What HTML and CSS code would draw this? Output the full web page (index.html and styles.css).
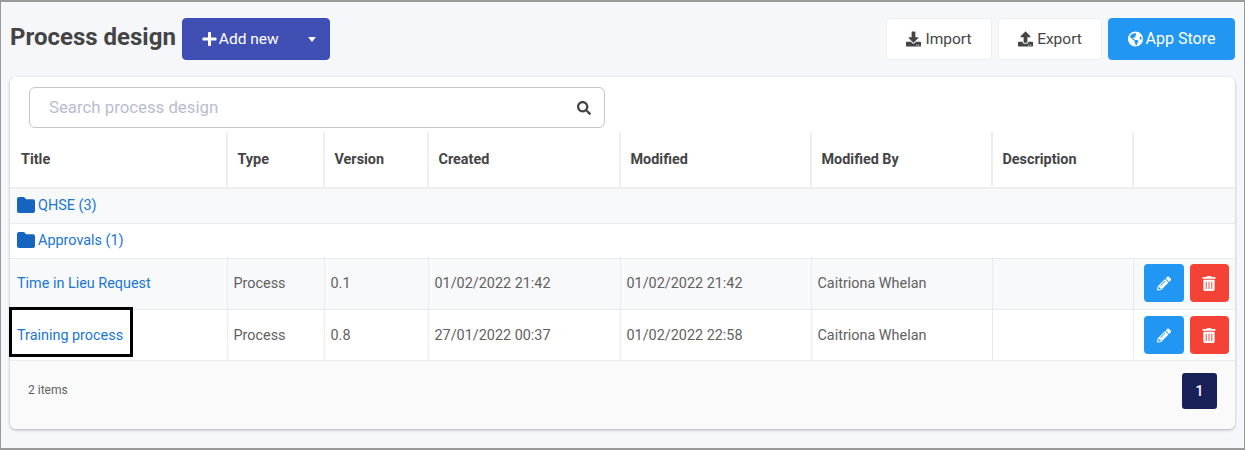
FILE: index.html
```html
<!DOCTYPE html>
<html lang="en">

<head>
    <meta charset="utf-8">
    <meta name="viewport" content="width=device-width, initial-scale=1">
    <title>Process design</title>
    <link rel="stylesheet" href="styles.css">
</head>

<body>
    <svg class="sprite" aria-hidden="true">
        <symbol id="i-plus" viewBox="0 0 448 512"><path d="M416 208H272V64c0-17.67-14.33-32-32-32h-32c-17.67 0-32 14.33-32 32v144H32c-17.67 0-32 14.33-32 32v32c0 17.67 14.33 32 32 32h144v144c0 17.67 14.33 32 32 32h32c17.67 0 32-14.33 32-32V304h144c17.67 0 32-14.33 32-32v-32c0-17.67-14.33-32-32-32z"/></symbol>
        <symbol id="i-download" viewBox="0 0 512 512"><path d="M216 0h80c13.3 0 24 10.7 24 24v168h87.7c17.8 0 26.7 21.5 14.1 34.1L269.7 378.3c-7.5 7.5-19.8 7.5-27.3 0L90.1 226.1c-12.6-12.6-3.7-34.1 14.1-34.1H192V24c0-13.3 10.7-24 24-24zm296 376v112c0 13.3-10.7 24-24 24H24c-13.3 0-24-10.7-24-24V376c0-13.3 10.7-24 24-24h146.7l49 49c20.1 20.1 52.5 20.1 72.6 0l49-49H488c13.3 0 24 10.7 24 24zm-124 88c0-11-9-20-20-20s-20 9-20 20 9 20 20 20 20-9 20-20zm64 0c0-11-9-20-20-20s-20 9-20 20 9 20 20 20 20-9 20-20z"/></symbol>
        <symbol id="i-upload" viewBox="0 0 512 512"><path d="M296 384h-80c-13.3 0-24-10.7-24-24V192h-87.7c-17.8 0-26.7-21.5-14.1-34.1L242.3 5.7c7.5-7.5 19.8-7.5 27.3 0l152.2 152.2c12.6 12.6 3.7 34.1-14.1 34.1H320v168c0 13.3-10.7 24-24 24zm216-8v112c0 13.3-10.7 24-24 24H24c-13.3 0-24-10.7-24-24V376c0-13.3 10.7-24 24-24h136v8c0 30.9 25.1 56 56 56h80c30.9 0 56-25.1 56-56v-8h136c13.3 0 24 10.7 24 24zm-124 88c0-11-9-20-20-20s-20 9-20 20 9 20 20 20 20-9 20-20zm64 0c0-11-9-20-20-20s-20 9-20 20 9 20 20 20 20-9 20-20z"/></symbol>
        <symbol id="i-globe" viewBox="0 0 496 512"><path d="M248 8C111.03 8 0 119.03 0 256s111.03 248 248 248 248-111.03 248-248S384.97 8 248 8zm82.29 357.6c-3.9 3.88-7.99 7.95-11.31 11.28-2.99 3-5.1 6.7-6.17 10.71-1.51 5.66-2.73 11.38-4.77 16.87l-17.39 46.85c-13.76 3-28 4.69-42.65 4.69v-27.38c1.69-12.62-7.64-36.26-22.63-51.25-6-6-9.37-14.14-9.37-22.63v-32.01c0-11.64-6.27-22.34-16.46-27.97-14.37-7.95-34.81-19.06-48.81-26.11-11.48-5.78-22.1-13.14-31.65-21.75l-.8-.72a114.792 114.792 0 0 1-18.06-20.74c-9.38-13.77-24.66-36.42-34.59-51.14 20.47-45.5 57.36-82.04 103.2-101.89l24.01 12.01C203.48 89.74 216 82.01 216 70.11v-11.3c7.99-1.29 16.12-2.11 24.39-2.42l28.3 28.3c6.25 6.25 6.25 16.38 0 22.63L264 112l-10.34 10.34c-3.12 3.12-3.12 8.19 0 11.31l4.69 4.69c3.12 3.12 3.12 8.19 0 11.31l-8 8a8.008 8.008 0 0 1-5.66 2.34h-8.99c-2.08 0-4.08.81-5.58 2.27l-9.92 9.65a8.008 8.008 0 0 0-1.58 9.31l15.59 31.19c2.66 5.32-1.21 11.58-7.15 11.58h-5.64c-1.93 0-3.79-.7-5.24-1.96l-9.28-8.06a16.017 16.017 0 0 0-15.55-3.1l-31.17 10.39a11.95 11.95 0 0 0-8.17 11.34c0 4.53 2.56 8.66 6.61 10.69l11.08 5.54c9.41 4.71 19.79 7.16 30.31 7.16s22.59 27.29 32 32h66.75c8.49 0 16.62 3.37 22.63 9.37l13.69 13.69a30.503 30.503 0 0 1 8.93 21.57 46.536 46.536 0 0 1-13.72 32.98zM417 274.25c-5.79-1.45-10.84-5-14.15-9.97l-17.98-26.97a23.97 23.97 0 0 1 0-26.62l19.59-29.38c2.32-3.47 5.5-6.29 9.24-8.15l12.98-6.49C440.2 193.59 448 223.87 448 256c0 8.67-.74 17.16-1.82 25.54L417 274.25z"/></symbol>
        <symbol id="i-search" viewBox="0 0 512 512"><path d="M505 442.7L405.3 343c-4.5-4.5-10.6-7-17-7H372c27.6-35.3 44-79.7 44-128C416 93.1 322.9 0 208 0S0 93.1 0 208s93.1 208 208 208c48.3 0 92.7-16.4 128-44v16.3c0 6.4 2.5 12.5 7 17l99.7 99.7c9.4 9.4 24.6 9.4 33.9 0l28.3-28.3c9.4-9.4 9.4-24.6.1-34zM208 336c-70.7 0-128-57.2-128-128 0-70.7 57.2-128 128-128 70.7 0 128 57.2 128 128 0 70.7-57.2 128-128 128z"/></symbol>
        <symbol id="i-folder" viewBox="0 0 18 16"><path d="M2 0h5l2.2 2.2H16a2 2 0 0 1 2 2V14a2 2 0 0 1-2 2H2a2 2 0 0 1-2-2V2a2 2 0 0 1 2-2z"/></symbol>
        <symbol id="i-pencil" viewBox="0 0 512 512"><path d="M497.9 142.1l-46.1 46.1c-4.7 4.7-12.3 4.7-17 0l-111-111c-4.7-4.7-4.7-12.3 0-17l46.1-46.1c18.7-18.7 49.1-18.7 67.9 0l60.1 60.1c18.8 18.7 18.8 49.1 0 67.9zM284.2 99.8L21.6 362.4.4 483.9c-2.9 16.4 11.4 30.6 27.8 27.8l121.5-21.3 262.6-262.6c4.7-4.7 4.7-12.3 0-17l-111-111c-4.8-4.7-12.4-4.7-17.1 0zM124.1 339.9c-5.5-5.5-5.5-14.3 0-19.8l154-154c5.5-5.5 14.3-5.5 19.8 0s5.5 14.3 0 19.8l-154 154c-5.5 5.5-14.3 5.5-19.8 0zM88 424h48v36.3l-64.5 11.3-31.1-31.1L51.7 376H88v48z"/></symbol>
        <symbol id="i-trash" viewBox="0 0 448 512"><path d="M32 464a48 48 0 0 0 48 48h288a48 48 0 0 0 48-48V128H32zm272-256a16 16 0 0 1 32 0v224a16 16 0 0 1-32 0zm-96 0a16 16 0 0 1 32 0v224a16 16 0 0 1-32 0zm-96 0a16 16 0 0 1 32 0v224a16 16 0 0 1-32 0zM432 32H312l-9.4-18.7A24 24 0 0 0 281.1 0H166.8a23.72 23.72 0 0 0-21.4 13.3L136 32H16A16 16 0 0 0 0 48v32a16 16 0 0 0 16 16h416a16 16 0 0 0 16-16V48a16 16 0 0 0-16-16z"/></symbol>
    </svg>

    <div class="frame">
        <header class="page-head">
            <h1 class="page-title">Process design</h1>
            <div class="split-btn">
                <button class="btn-add" type="button"><svg class="icon"><use href="#i-plus"/></svg>Add new</button>
                <button class="btn-caret" type="button" aria-label="More"><span class="caret"></span></button>
            </div>
            <div class="head-actions">
                <button class="btn btn-import" type="button"><svg class="icon"><use href="#i-download"/></svg>Import</button>
                <button class="btn btn-export" type="button"><svg class="icon"><use href="#i-upload"/></svg>Export</button>
                <button class="btn btn-store" type="button"><svg class="icon"><use href="#i-globe"/></svg>App Store</button>
            </div>
        </header>

        <main class="card">
            <div class="search">
                <input class="search-input" type="text" placeholder="Search process design">
                <svg class="search-icon"><use href="#i-search"/></svg>
            </div>

            <table class="grid">
                <colgroup>
                    <col class="col-title">
                    <col class="col-type">
                    <col class="col-version">
                    <col class="col-created">
                    <col class="col-modified">
                    <col class="col-by">
                    <col class="col-desc">
                    <col>
                </colgroup>
                <thead>
                    <tr>
                        <th>Title</th>
                        <th>Type</th>
                        <th>Version</th>
                        <th>Created</th>
                        <th>Modified</th>
                        <th>Modified By</th>
                        <th>Description</th>
                        <th></th>
                    </tr>
                </thead>
                <tbody>
                    <tr class="folder-row alt">
                        <td colspan="8"><a href="#"><svg class="folder-icon"><use href="#i-folder"/></svg>QHSE (3)</a></td>
                    </tr>
                    <tr class="folder-row">
                        <td colspan="8"><a href="#"><svg class="folder-icon"><use href="#i-folder"/></svg>Approvals (1)</a></td>
                    </tr>
                    <tr class="alt">
                        <td><a href="#">Time in Lieu Request</a></td>
                        <td>Process</td>
                        <td>0.1</td>
                        <td>01/02/2022 21:42</td>
                        <td>01/02/2022 21:42</td>
                        <td>Caitriona Whelan</td>
                        <td></td>
                        <td>
                            <div class="row-actions">
                                <button class="btn-square btn-edit" type="button" aria-label="Edit"><svg><use href="#i-pencil"/></svg></button>
                                <button class="btn-square btn-delete" type="button" aria-label="Delete"><svg><use href="#i-trash"/></svg></button>
                            </div>
                        </td>
                    </tr>
                    <tr class="low">
                        <td class="marked"><a href="#">Training process</a><span class="callout"></span></td>
                        <td>Process</td>
                        <td>0.8</td>
                        <td>27/01/2022 00:37</td>
                        <td>01/02/2022 22:58</td>
                        <td>Caitriona Whelan</td>
                        <td></td>
                        <td>
                            <div class="row-actions">
                                <button class="btn-square btn-edit" type="button" aria-label="Edit"><svg><use href="#i-pencil"/></svg></button>
                                <button class="btn-square btn-delete" type="button" aria-label="Delete"><svg><use href="#i-trash"/></svg></button>
                            </div>
                        </td>
                    </tr>
                </tbody>
            </table>

            <footer class="card-foot">
                <span class="item-count">2 items</span>
                <button class="page-num" type="button">1</button>
            </footer>
        </main>
    </div>
</body>

</html>
```

FILE: styles.css
```css
html {
    box-sizing: border-box;
    height: 100%;
}

*,
*:before,
*:after {
    box-sizing: inherit;
}

body {
    font-family: Roboto, "Liberation Sans", sans-serif;
    margin: 0;
    height: 100%;
    overflow: hidden;
}

button {
    font-family: inherit;
    cursor: pointer;
}

a {
    color: #1976d2;
    text-decoration: none;
}

.sprite {
    display: none;
}

.frame {
    height: 450px;
    padding: 16px 9px 0;
    background: #f5f7fb;
    border: solid #9a9a9a;
    border-width: 2px 1px;
}

/* page header */
.page-head {
    display: flex;
    align-items: center;
    height: 42px;
    margin-bottom: 17px;
}

.page-title {
    margin: 0 6px 4px 0;
    font-size: 24px;
    font-weight: 700;
    color: #444;
}

.split-btn {
    display: flex;
    width: 148px;
    height: 42px;
    background: #3f4fb3;
    border: 1px solid #3a4bbd;
    border-radius: 4px;
}

.btn-add,
.btn-caret {
    display: flex;
    align-items: center;
    height: 100%;
    padding: 0;
    color: #fff;
    background: none;
    border: 0;
    font-size: 15.5px;
}

.btn-add {
    flex: 1;
    padding-left: 19px;
}

.btn-add .icon {
    margin-right: 2px;
}

.btn-caret {
    justify-content: center;
    width: 34px;
}

.caret {
    border: 4.5px solid transparent;
    border-top: 5px solid #fff;
    border-bottom: 0;
}

.icon {
    width: 15px;
    height: 16px;
    margin-right: 4px;
    fill: currentColor;
}

.head-actions {
    display: flex;
    gap: 6px;
    margin-left: auto;
}

.btn {
    display: flex;
    align-items: center;
    justify-content: center;
    height: 42px;
    padding: 0;
    color: #444;
    background: #fff;
    border: 1px solid #eceef2;
    border-radius: 4px;
    font-size: 15.5px;
}

.btn-import {
    width: 106px;
}

.btn-export {
    width: 104px;
}

.btn-store {
    width: 127px;
    padding-bottom: 1px;
    color: #fff;
    background: #2196f3;
    border-color: #2196f3;
    font-size: 16px;
}

.btn-store .icon {
    margin-right: 3px;
}

/* card with search and table */
.card {
    height: 352px;
    padding-top: 10px;
    background: #fff;
    border-radius: 6px;
    box-shadow: 0 1px 3px rgba(0, 0, 0, .3);
}

.search {
    display: flex;
    align-items: center;
    width: 576px;
    height: 41px;
    margin: 0 0 4px 19px;
    padding: 0 13px 0 19px;
    border: 1px solid #c6c6c6;
    border-radius: 6px;
}

.search-input {
    flex: 1;
    min-width: 0;
    padding: 0 0 2px;
    border: 0;
    outline: 0;
    font-family: inherit;
    font-size: 16.8px;
}

.search-input::placeholder {
    color: #b8bccf;
}

.search-icon {
    width: 14px;
    height: 14px;
    fill: #444;
}

.grid {
    width: 100%;
    table-layout: fixed;
    border-collapse: collapse;
    font-size: 14.4px;
    color: #616161;
}

.col-title {
    width: 217px;
}

.col-type {
    width: 97px;
}

.col-version {
    width: 104px;
}

.col-created {
    width: 192px;
}

.col-modified {
    width: 191px;
}

.col-by {
    width: 181px;
}

.col-desc {
    width: 141px;
}

.grid th {
    height: 56px;
    padding: 0 0 1px 9.5px;
    text-align: left;
    font-weight: 700;
    color: #444;
    border-left: 2px solid #eeeeee;
    border-bottom: 2px solid #eeeeee;
}

.grid th:first-child {
    padding-left: 11px;
    border-left: 0;
}

.grid td {
    height: 51px;
    padding: 0 0 0 6px;
    border-left: 1px solid #ebebeb;
    border-bottom: 1px solid #ebebeb;
}

.grid .alt td {
    padding-bottom: 1px;
}

.grid .low td {
    padding-top: 1px;
}

.grid td:first-child {
    padding-left: 7px;
    border-left: 0;
}

.grid .folder-row td {
    height: 35px;
    padding-bottom: 1px;
}

.grid .folder-row a {
    display: flex;
    align-items: center;
}

.alt {
    background: #f8f9fb;
}

.folder-icon {
    width: 18px;
    height: 16px;
    margin: 0 3.5px 0 -.5px;
    fill: #1565c0;
}

.row-actions {
    display: flex;
    gap: 6px;
    margin-left: 4px;
}

.btn-square {
    display: flex;
    align-items: center;
    justify-content: center;
    width: 40px;
    height: 38px;
    padding: 0;
    border: 0;
    border-radius: 4px;
    fill: #fff;
}

.btn-square svg {
    width: 14px;
    height: 15px;
}

.btn-edit {
    background: #2196f3;
}

.btn-delete {
    width: 39px;
    background: #f44336;
}

/* annotation drawn over the screenshot */
.marked {
    position: relative;
}

.callout {
    position: absolute;
    left: -1px;
    top: -3px;
    width: 124px;
    height: 50px;
    border: 3px solid #000;
}

.card-foot {
    display: flex;
    justify-content: space-between;
    height: 68px;
    padding: 12px 18px 0 18px;
    background: #fafafa;
    border-radius: 0 0 6px 6px;
}

.item-count {
    margin-top: 10px;
    font-size: 12px;
    color: #616161;
}

.page-num {
    width: 35px;
    height: 36px;
    padding: 0;
    color: #fff;
    background: #1a2158;
    border: 0;
    border-radius: 3px;
    font-size: 14px;
    font-weight: 500;
}
```
